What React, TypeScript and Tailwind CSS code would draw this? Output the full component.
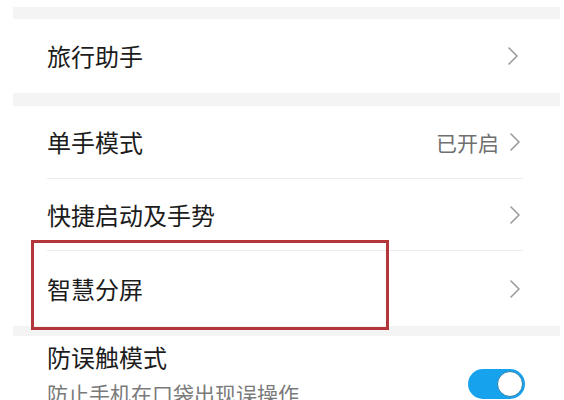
import React from 'react';

const font = { fontFamily: '"Noto Sans CJK SC", "Noto Sans", sans-serif' };

function Chevron() {
  return (
    <svg width="12" height="20" viewBox="0 0 12 20" fill="none" className="shrink-0">
      <polyline points="2,2 10,10 2,18" stroke="#9a9a9a" strokeWidth="1.6" strokeLinecap="round" strokeLinejoin="round" />
    </svg>
  );
}

function Row({ label, value, divider, h }: { label: string; value?: string; divider?: boolean; h: string }) {
  return (
    <div className={`flex items-center justify-between ${h} ${divider ? 'border-b border-[#ebebeb]' : ''}`}>
      <span className="text-[24px] leading-none text-[#1c1c1c]">{label}</span>
      <div className="flex items-center gap-[10px] mr-[2px]">
        {value && <span className="text-[21px] leading-none text-[#6f6f6f]">{value}</span>}
        <Chevron />
      </div>
    </div>
  );
}

export default function App() {
  return (
    <div className="relative w-[564px] h-[400px] overflow-hidden bg-white" style={font}>
      <div className="ml-[13px] mr-[4px] flex flex-col bg-[#f4f4f4]">
        <div className="h-[7px] bg-white" />
        <div className="mt-[12px] bg-white px-[34px]">
          <div className="pr-[5px]">
            <Row label="旅行助手" h="h-[74px]" />
          </div>
        </div>
        <div className="mt-[13px] bg-white pl-[34px] pr-[37px]">
          <Row label="单手模式" value="已开启" divider h="h-[73px]" />
          <Row label="快捷启动及手势" divider h="h-[72px]" />
          <Row label="智慧分屏" h="h-[75px]" />
        </div>
        <div className="mt-[10px] bg-white pl-[34px] pr-[35px] pt-[6px] pb-[20px]">
          <div className="flex items-center justify-between">
            <div className="flex flex-col">
              <span className="text-[24px] leading-[30px] text-[#1c1c1c]">防误触模式</span>
              <span className="mt-[7px] text-[21px] leading-[28px] text-[#7a7a7a]">防止手机在口袋出现误操作</span>
            </div>
            <div className="mt-[18px] flex h-[30px] w-[57px] items-center justify-end rounded-full bg-[#17a2ee] pr-[2px]">
              <div className="h-[26px] w-[26px] rounded-full border border-[#2d7fa8] bg-white" />
            </div>
          </div>
        </div>
      </div>
      <div className="pointer-events-none absolute left-[31px] top-[240px] h-[90px] w-[358px] border-[3px] border-[#b3363d]" />
    </div>
  );
}
